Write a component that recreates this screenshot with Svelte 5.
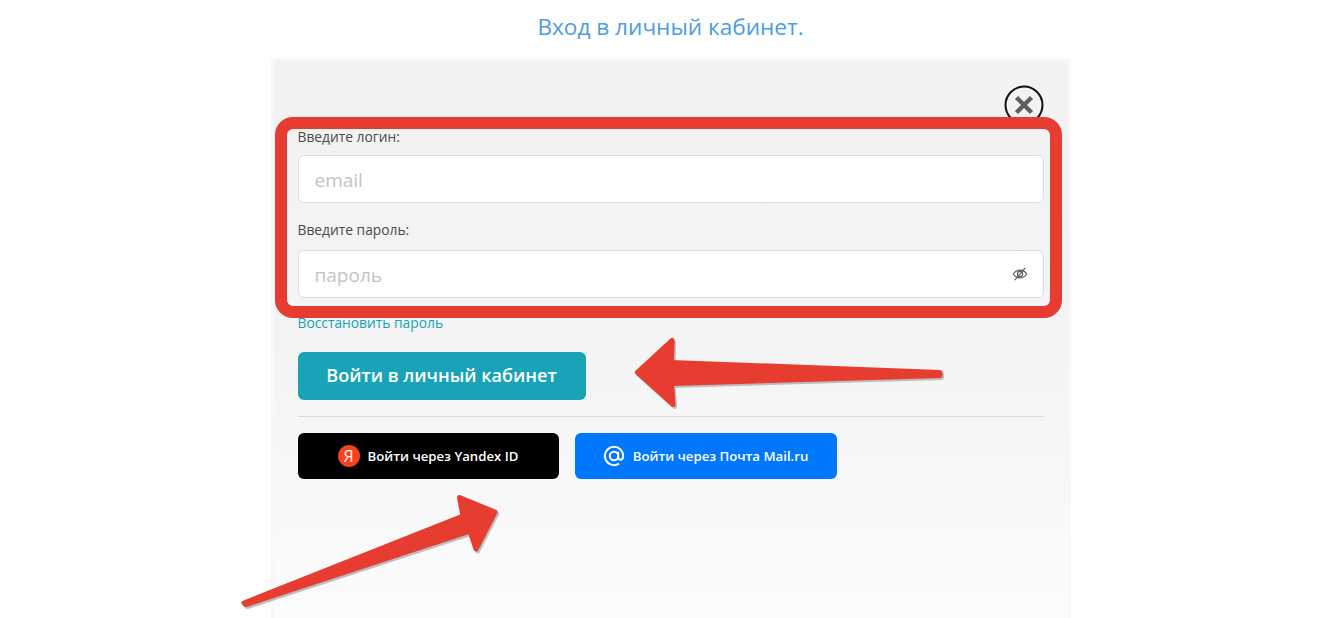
<script lang="ts">
	let login = $state('');
	let password = $state('');
</script>

<div class="page">
	<h1 class="title">Вход в личный кабинет.</h1>

	<div class="card">
		<div class="close-row">
			<button type="button" class="close" aria-label="Закрыть">
				<svg viewBox="0 0 40 40" width="40" height="40" fill="none">
					<circle cx="20" cy="20" r="18.5" stroke="#111" stroke-width="2" />
					<path d="M12.5 12.5 27.5 27.5M27.5 12.5 12.5 27.5" stroke="#5e5e5e" stroke-width="4.4" />
				</svg>
			</button>
		</div>

		<form class="form">
			<label class="field">
				<span class="label">Введите логин:</span>
				<input class="input" type="text" placeholder="email" bind:value={login} />
			</label>

			<label class="field second">
				<span class="label">Введите пароль:</span>
				<span class="input-wrap">
					<input class="input" type="password" placeholder="пароль" bind:value={password} />
					<svg class="eye" viewBox="0 0 16 16" width="16" height="16" fill="none" stroke="#5f5f5f" stroke-width="1.2">
						<path d="M1.2 8C3 5.4 5.3 4.1 8 4.1s5 1.3 6.8 3.9C13 10.6 10.7 11.9 8 11.9S3 10.6 1.2 8Z" />
						<circle cx="8" cy="8" r="2.6" />
						<path d="M13.2 1.8 2.8 14.2" />
					</svg>
				</span>
			</label>

			<a class="restore" href="#restore">Восстановить пароль</a>

			<button type="button" class="submit">Войти в личный кабинет</button>
		</form>

		<hr class="divider" />

		<div class="socials">
			<button type="button" class="social yandex">
				<span class="ya-badge">Я</span>
				Войти через Yandex ID
			</button>
			<button type="button" class="social mail">
				<svg viewBox="0 0 24 24" width="22" height="22" fill="none" stroke="#fff" stroke-width="2.2">
					<circle cx="12" cy="12" r="4.6" />
					<path d="M16.6 7.4v6.2c0 3.6 5.4 3.4 5.4-1.6C22 6.2 17.5 2 12 2S2 6.5 2 12s4.5 10 10 10c2.2 0 3.9-.5 5.6-1.6" />
				</svg>
				Войти через Почта Mail.ru
			</button>
		</div>
	</div>

	<!-- annotations painted over the screenshot -->
	<div class="red-frame"></div>
	<svg class="arrows" viewBox="0 0 1341 618" width="1341" height="618">
		<g class="arrow-shadow" transform="translate(1.5 2)">
			<polygon points="637.5,372.3 672,340.5 671.5,362.5 940,372.5 940,375.5 671.5,383.5 673,404.5" />
			<polygon points="244,603 463,516 459.5,497.5 495,512 476,549 470,531 246,604.5" />
		</g>
		<g class="arrow-fill">
			<polygon points="637.5,372.3 672,340.5 671.5,362.5 940,372.5 940,375.5 671.5,383.5 673,404.5" />
			<polygon points="244,603 463,516 459.5,497.5 495,512 476,549 470,531 246,604.5" />
		</g>
	</svg>
</div>

<style>
	:global(body) {
		margin: 0;
		background: #fff;
		overflow: hidden;
	}

	.page {
		position: relative;
		width: 1341px;
		height: 618px;
		overflow: hidden;
		font-family: "Open Sans", "Noto Sans", sans-serif;
		color: #444;
	}

	.title {
		margin: 0;
		height: 58px;
		line-height: 54px;
		text-align: center;
		font-size: 22.6px;
		font-weight: 400;
		color: #4a9ddf;
	}

	.card {
		box-sizing: border-box;
		width: 800px;
		height: 600px;
		margin: 0 auto;
		padding: 24px 24px 0;
		border: 3px solid #f8f8f8;
		background: linear-gradient(180deg, #f2f2f2 0%, #f4f4f4 50%, #fcfcfc 95%);
	}

	.close-row {
		display: flex;
		justify-content: flex-end;
		height: 40px;
	}

	.close {
		padding: 0;
		width: 40px;
		height: 40px;
		border: 0;
		background: none;
		cursor: pointer;
	}

	.form {
		display: flex;
		flex-direction: column;
		align-items: flex-start;
	}

	.field {
		display: flex;
		flex-direction: column;
		width: 100%;
		margin-top: 4px;
	}

	.field.second {
		margin-top: 19px;
	}

	.label {
		height: 26px;
		font-size: 13.8px;
		line-height: 16px;
		color: #4a4a4a;
	}

	.second .label {
		height: 28px;
	}

	.input-wrap {
		position: relative;
		display: block;
	}

	.input {
		box-sizing: border-box;
		display: block;
		width: 100%;
		height: 48px;
		padding: 2px 16px 0;
		border: 1px solid #dcdcdc;
		border-radius: 6px;
		background: #fff;
		font-family: inherit;
		font-size: 19px;
		color: #444;
		outline: none;
	}

	.input::placeholder {
		color: #c4c4c4;
		opacity: 1;
	}

	.eye {
		position: absolute;
		right: 16px;
		top: 16px;
	}

	.restore {
		margin-top: 16px;
		font-size: 13.8px;
		line-height: 18px;
		color: #18a2b8;
		text-decoration: none;
	}

	.submit {
		width: 288px;
		height: 48px;
		margin-top: 20px;
		padding: 0 0 2px;
		border: 0;
		border-radius: 6px;
		background: #18a3b9;
		color: #fff;
		font-family: inherit;
		font-size: 18.1px;
		font-weight: 600;
		cursor: pointer;
	}

	.divider {
		height: 1px;
		margin: 16px 0 16px;
		border: 0;
		background: #dcdcdc;
	}

	.socials {
		display: flex;
		gap: 16px;
	}

	.social {
		display: flex;
		align-items: center;
		justify-content: center;
		gap: 8px;
		width: 261px;
		height: 46px;
		padding: 0;
		border: 0;
		border-radius: 6px;
		color: #fff;
		font-family: inherit;
		font-size: 13.2px;
		font-weight: 600;
		cursor: pointer;
	}

	.yandex {
		background: #000;
	}

	.mail {
		width: 262px;
		background: #0077ff;
	}

	.ya-badge {
		display: flex;
		align-items: center;
		justify-content: center;
		width: 22px;
		height: 22px;
		border-radius: 50%;
		background: #fc3f1d;
		font-size: 16px;
		font-weight: 500;
	}

	.red-frame {
		position: absolute;
		left: 275px;
		top: 117px;
		box-sizing: border-box;
		width: 787px;
		height: 201px;
		border: 12px solid #e73c30;
		border-radius: 18px;
		pointer-events: none;
	}

	.arrows {
		position: absolute;
		left: 0;
		top: 0;
		pointer-events: none;
	}

	.arrows polygon {
		stroke-width: 5;
		stroke-linejoin: round;
	}

	.arrow-shadow polygon {
		fill: #bdbdbd;
		stroke: #bdbdbd;
	}

	.arrow-fill polygon {
		fill: #e73c30;
		stroke: #e73c30;
	}
</style>
